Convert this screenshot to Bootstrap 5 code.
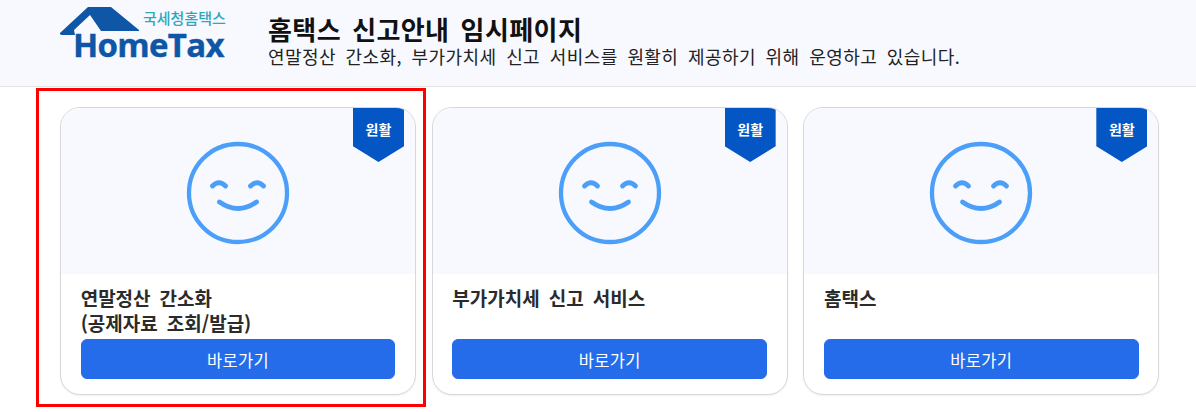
<!DOCTYPE html>
<html lang="ko">
<head>
<meta charset="utf-8">
<title>홈택스 신고안내 임시페이지</title>
<link rel="stylesheet" href="https://cdn.jsdelivr.net/npm/bootstrap@5.3.0/dist/css/bootstrap.min.css">
<style>
html,body{height:412px;overflow:hidden}
body{font-family:"Noto Sans CJK KR","Liberation Sans",sans-serif;background:#fff;position:relative}
.top-band{height:87px;background:#f8f9ff;border-bottom:1px solid #e4e4e8;padding-left:60px}
.logo-svg{width:170px;height:70px;flex:none;margin-top:-16px}
.logo-word{font-family:"Open Sans","Liberation Sans",sans-serif;font-weight:700;font-size:33px;fill:#0f57a6;stroke:#0f57a6;stroke-width:.4px;letter-spacing:-.7px}
.logo-kr{font-family:"Noto Sans CJK KR",sans-serif;font-size:15px;font-weight:500;fill:#2ea7bd}
.head-title{font-size:26px;font-weight:700;color:#111;letter-spacing:.4px;word-spacing:3.500px;line-height:30px;margin:0}
.head-sub{font-size:18px;color:#222;letter-spacing:.4px;word-spacing:4.300px;line-height:24px;margin:0}
.head-text{margin-left:38px;margin-top:-5px}
.deck{width:1099.340px;margin:20px 0 0 60px;gap:15.670px}
.svc{flex:1 1 0;height:288px;border:1px solid #d8d8dc;border-radius:20px;overflow:hidden;position:relative;box-shadow:0 1px 2px rgba(0,0,0,.06);background:#fff}
.svc-top{height:166px;background:#f8f9ff;padding-top:4px}
.face{width:104px;height:104px}
.ribbon{position:absolute;top:0;right:11px;width:51px;height:54px;background:#0456c4;clip-path:polygon(0 0,100% 0,100% 71%,50% 100%,0 71%);color:#fff;font-size:14px;font-weight:700;text-align:center;line-height:42px}
.svc-body{padding:11px 19.670px 15px;height:121px}
.svc-name{font-size:19px;font-weight:700;color:#2b2b2b;line-height:25px;word-spacing:3.700px;margin:0;height:54px}
.go-btn{background:#256ceb;border-color:#256ceb;color:#fff;font-size:16.500px;height:40px;border-radius:6px;letter-spacing:.3px;padding:0;line-height:40px}
.go-btn:hover{background:#256ceb;color:#fff}
.red-box{position:absolute;left:36px;top:88px;width:390px;height:319px;border:3px solid #f00;pointer-events:none}
</style>
</head>
<body>
<header class="top-band d-flex align-items-center">
  <svg class="logo-svg" viewBox="0 0 170 70" role="img" aria-label="국세청홈택스 HomeTax">
    <path fill="#0f57a6" d="M28 7 L51 7 L79 30 L79 31 L41 31 L30 15 L14 30 L15 35 L1.500 35 Q-1 34 .500 32.500 Z"/>
    <text class="logo-kr" x="83" y="24">국세청홈택스</text>
    <text class="logo-word" x="13" y="57">HomeTax</text>
  </svg>
  <div class="head-text">
    <h1 class="head-title">홈택스 신고안내 임시페이지</h1>
    <p class="head-sub">연말정산 간소화, 부가가치세 신고 서비스를 원활히 제공하기 위해 운영하고 있습니다.</p>
  </div>
</header>
<main class="deck d-flex">
  <section class="svc">
    <div class="svc-top d-flex align-items-center justify-content-center">
      <svg class="face" viewBox="0 0 104 104" fill="none" stroke="#4c9ff8" stroke-width="4.300" stroke-linecap="round"><circle cx="52" cy="52" r="49"/><path d="M26.500 45Q33 38.500 39.500 45M64.500 45Q71 38.500 77.500 45M33.500 61Q52 74 70.500 61" stroke-width="4.800"/></svg>
    </div>
    <div class="ribbon">원활</div>
    <div class="svc-body">
      <p class="svc-name">연말정산 간소화<br>(공제자료 조회/발급)</p>
      <a href="#" class="btn go-btn w-100">바로가기</a>
    </div>
  </section>
  <section class="svc">
    <div class="svc-top d-flex align-items-center justify-content-center">
      <svg class="face" viewBox="0 0 104 104" fill="none" stroke="#4c9ff8" stroke-width="4.300" stroke-linecap="round"><circle cx="52" cy="52" r="49"/><path d="M26.500 45Q33 38.500 39.500 45M64.500 45Q71 38.500 77.500 45M33.500 61Q52 74 70.500 61" stroke-width="4.800"/></svg>
    </div>
    <div class="ribbon">원활</div>
    <div class="svc-body">
      <p class="svc-name">부가가치세 신고 서비스</p>
      <a href="#" class="btn go-btn w-100">바로가기</a>
    </div>
  </section>
  <section class="svc">
    <div class="svc-top d-flex align-items-center justify-content-center">
      <svg class="face" viewBox="0 0 104 104" fill="none" stroke="#4c9ff8" stroke-width="4.300" stroke-linecap="round"><circle cx="52" cy="52" r="49"/><path d="M26.500 45Q33 38.500 39.500 45M64.500 45Q71 38.500 77.500 45M33.500 61Q52 74 70.500 61" stroke-width="4.800"/></svg>
    </div>
    <div class="ribbon">원활</div>
    <div class="svc-body">
      <p class="svc-name">홈택스</p>
      <a href="#" class="btn go-btn w-100">바로가기</a>
    </div>
  </section>
</main>
<div class="red-box"></div>
</body>
</html>
